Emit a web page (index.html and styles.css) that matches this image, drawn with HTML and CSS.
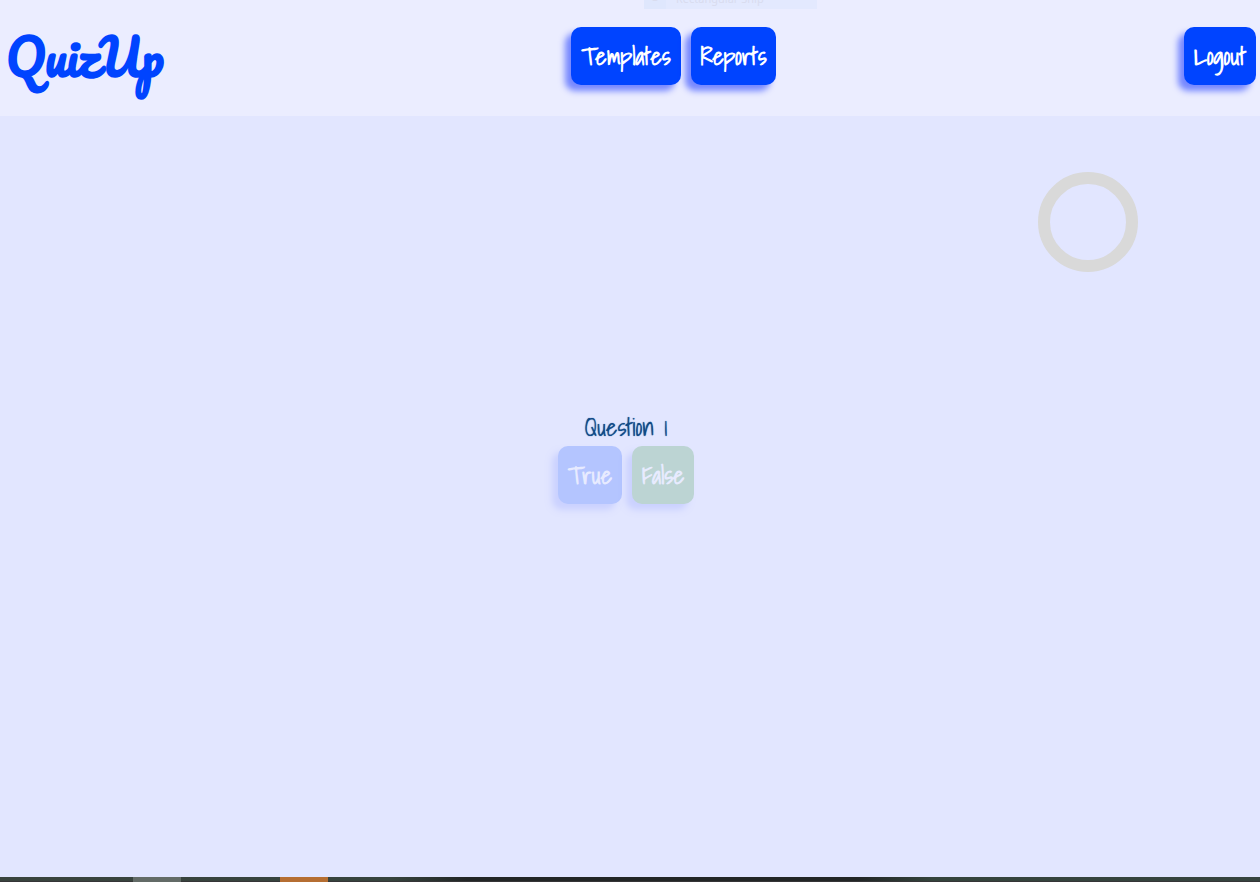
FILE: index.html
```html
<!DOCTYPE html>
<html lang="en">
<head>
<meta charset="utf-8">
<title>QuizUp</title>
<link rel="stylesheet" href="styles.css">
</head>
<body>
<div class="tooltip"><span class="tooltip-mark">–</span>Rectangular Snip</div>
<header class="header">
  <a class="logo" href="#">QuizUp</a>
  <nav class="nav">
    <button class="button" type="button">Templates</button>
    <button class="button" type="button">Reports</button>
  </nav>
  <button class="button" type="button">Logout</button>
</header>
<main class="main">
  <div class="timer"></div>
  <section class="question">
    <h1 class="question-title">Question 1</h1>
    <div class="answers">
      <button class="button" type="button" disabled>True</button>
      <button class="button answer-false" type="button" disabled>False</button>
    </div>
  </section>
</main>
<footer class="taskbar">
  <span class="task"></span>
  <span class="task task-alert"></span>
</footer>
</body>
</html>
```
FILE: styles.css
```css
* {
  box-sizing: border-box;
}

body {
  margin: 0;
  min-height: 100vh;
  display: flex;
  flex-direction: column;
  background: #e2e6ff;
  font-family: "Shadows Into Light", "Comic Neue", "Lato", sans-serif;
}

.header {
  display: flex;
  align-items: center;
  justify-content: space-between;
  min-height: 116px;
  padding: 0 4px 4px 6px;
  background: #ebedff;
}

.logo {
  padding-top: 2px;
  color: #0044ff;
  font-family: "Pacifico", "Lato", sans-serif;
  font-size: 48px;
  line-height: 66px;
  font-weight: 700;
  text-decoration: none;
}

.nav,
.answers {
  display: flex;
  gap: 10px;
}

.button {
  padding: 10px;
  border: 0;
  border-radius: 10px;
  background: #0044ff;
  box-shadow: -6px 6px 6px rgba(0, 34, 255, 0.5);
  color: #fff;
  font-family: inherit;
  font-size: 24px;
  font-weight: 700;
  line-height: 38px;
}

.button:disabled {
  opacity: 0.2;
}

.answer-false {
  background: #288f28;
}

.main {
  flex: 1;
  display: flex;
  flex-direction: column;
  padding: 56px 8px 0 0;
}

.timer {
  align-self: flex-end;
  width: 100px;
  height: 100px;
  margin-right: 114px;
  border: 12px solid #d9d9d9;
  border-radius: 50%;
}

.question {
  display: flex;
  flex-direction: column;
  align-items: center;
  margin-top: 136px;
}

.question-title {
  margin: 0;
  color: #104a88;
  font-size: 24px;
  font-weight: 400;
  line-height: 38px;
  padding-bottom: 0;
  text-shadow: 0 0 1px #104a88;
}

.tooltip {
  position: absolute;
  top: -11px;
  left: 644px;
  width: 173px;
  height: 20px;
  padding-left: 32px;
  background: #e3e9fe;
  color: #d9dcef;
  font-family: "Noto Sans", sans-serif;
  font-size: 11px;
  line-height: 20px;
}

.tooltip-mark {
  position: absolute;
  top: 0;
  left: 0;
  width: 22px;
  height: 20px;
  background: #dfe7fd;
  text-align: center;
}

.taskbar {
  display: flex;
  gap: 99px;
  height: 5px;
  padding-left: 133px;
  border-bottom: 1px solid #353537;
  background: linear-gradient(90deg, #39433e 0, #36433d 31%, #222626 37%, #222626 68%, #34433c 74%, #36433f 100%);
}

.task {
  width: 48px;
  height: 5px;
  background: #636b67;
}

.task-alert {
  background: #b56e32;
}
```
